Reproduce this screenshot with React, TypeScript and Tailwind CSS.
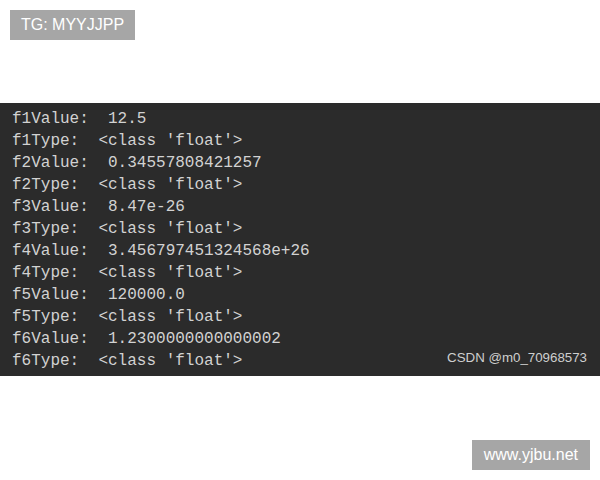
const lines: [string, string][] = [
  ["f1Value:", "12.5"],
  ["f1Type:", "<class 'float'>"],
  ["f2Value:", "0.34557808421257"],
  ["f2Type:", "<class 'float'>"],
  ["f3Value:", "8.47e-26"],
  ["f3Type:", "<class 'float'>"],
  ["f4Value:", "3.456797451324568e+26"],
  ["f4Type:", "<class 'float'>"],
  ["f5Value:", "120000.0"],
  ["f5Type:", "<class 'float'>"],
  ["f6Value:", "1.2300000000000002"],
  ["f6Type:", "<class 'float'>"],
];

function App() {
  return (
    <div className="w-[600px] h-[480px] bg-white flex flex-col" style={{ fontFamily: "'Liberation Sans', Arial, sans-serif" }}>
      <div className="pt-[10px] pl-[10px] h-[103px]">
        <div className="inline-flex items-center h-[30px] px-[11px] bg-[#a6a6a6] text-white text-[16px]">TG: MYYJJPP</div>
      </div>
      <div className="relative h-[273px] bg-[#2b2b2b] overflow-hidden">
        <div
          className="pt-[5px] pl-[12px] text-[16px] leading-[22px] text-[#d2d2d2] whitespace-pre"
          style={{ fontFamily: "'Liberation Mono', 'DejaVu Sans Mono', monospace" }}
        >
          {lines.map(([k, v], i) => (
            <div key={i}>{k + "  " + v}</div>
          ))}
        </div>
        <div className="absolute right-[13px] bottom-[8px] text-[13.3px] text-[#cfcfcf]">CSDN @m0_70968573</div>
      </div>
      <div className="flex justify-end pr-[10px] pt-[64px]">
        <div className="inline-flex items-center h-[30px] px-[12px] bg-[#a6a6a6] text-white text-[16px]">www.yjbu.net</div>
      </div>
    </div>
  );
}

export default App;
